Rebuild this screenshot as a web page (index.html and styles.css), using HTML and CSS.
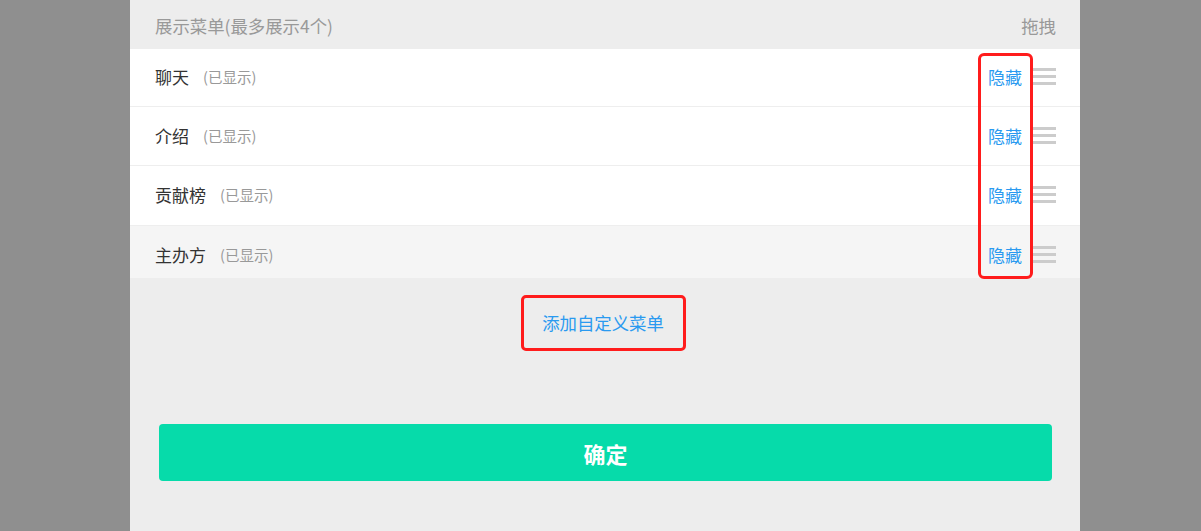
FILE: index.html
```html
<!DOCTYPE html>
<html lang="zh-CN">
<head>
  <meta charset="UTF-8" />
  <meta name="viewport" content="width=device-width, initial-scale=1.0"/>
  <title>展示菜单</title>
  <link rel="stylesheet" href="styles.css">
</head>
<body>
  <div class="panel">
    <div class="head">
      <span>展示菜单(最多展示4个)</span>
      <span>拖拽</span>
    </div>

    <div class="menu-list">
      <div class="item">
        <span class="name">聊天</span><span class="state">(已显示)</span>
        <a class="hide">隐藏</a><i class="drag"><b></b><b></b><b></b></i>
      </div>
      <div class="item">
        <span class="name">介绍</span><span class="state">(已显示)</span>
        <a class="hide">隐藏</a><i class="drag"><b></b><b></b><b></b></i>
      </div>
      <div class="item">
        <span class="name">贡献榜</span><span class="state">(已显示)</span>
        <a class="hide">隐藏</a><i class="drag"><b></b><b></b><b></b></i>
      </div>
      <div class="item active">
        <span class="name">主办方</span><span class="state">(已显示)</span>
        <a class="hide">隐藏</a><i class="drag"><b></b><b></b><b></b></i>
      </div>
      <div class="mark-col"></div>
    </div>

    <div class="add">
      <a class="add-link">添加自定义菜单</a>
    </div>

    <button class="ok">确定</button>
  </div>
</body>
</html>
```

FILE: styles.css
```css
body {
  margin: 0;
  background: #8f8f8f;
  font-family: "Microsoft YaHei", "Noto Sans CJK SC", sans-serif;
}
.panel {
  width: 950px;
  height: 531px;
  margin-left: 130px;
  background: #ededed;
  overflow: hidden;
}
.head {
  height: 49px;
  padding: 0 24px 0 25px;
  display: flex;
  justify-content: space-between;
  align-items: center;
  padding-top: 2px;
  box-sizing: border-box;
  font-size: 17.4px;
  color: #999;
}
.menu-list {
  position: relative;
}
.item {
  padding: 0 24px 2px 25px;
  box-sizing: border-box;
  height: 59px;
  display: flex;
  align-items: center;
  background: #fff;
  border-bottom: 1px solid #eee;
}
.item:first-child {
  height: 58px;
}
.item:nth-child(3) {
  height: 60px;
}
.item.active {
  background: #f5f5f5;
  border-bottom: none;
  height: 52px;
  padding: 4px 24px 0 25px;
}
.name {
  font-size: 17px;
  color: #333;
}
.state {
  margin-left: 14px;
  font-size: 14.5px;
  color: #999;
}
.hide {
  margin-left: auto;
  font-size: 17px;
  color: #2a9af0;
}
.drag {
  margin-left: 11px;
  width: 23px;
  display: flex;
  flex-direction: column;
  gap: 4px;
}
.drag b {
  display: block;
  height: 3px;
  background: #ccc;
}
.mark-col {
  position: absolute;
  left: 848px;
  top: 4px;
  width: 49px;
  height: 220px;
  border: 3px solid #ff1c1c;
  border-radius: 6px;
}
.add {
  padding-top: 17px;
  text-align: center;
}
.add-link {
  display: inline-block;
  width: 159px;
  height: 50px;
  line-height: 50px;
  border: 3px solid #ff1c1c;
  border-radius: 5px;
  font-size: 17.4px;
  color: #2a9af0;
  margin-left: -4px;
}
.ok {
  display: block;
  width: 893px;
  height: 57px;
  margin: 73px 0 0 29px;
  border: none;
  border-radius: 4px;
  background: #06dbaa;
  color: #fff;
  font-family: inherit;
  font-size: 22px;
  font-weight: bold;
}
```
